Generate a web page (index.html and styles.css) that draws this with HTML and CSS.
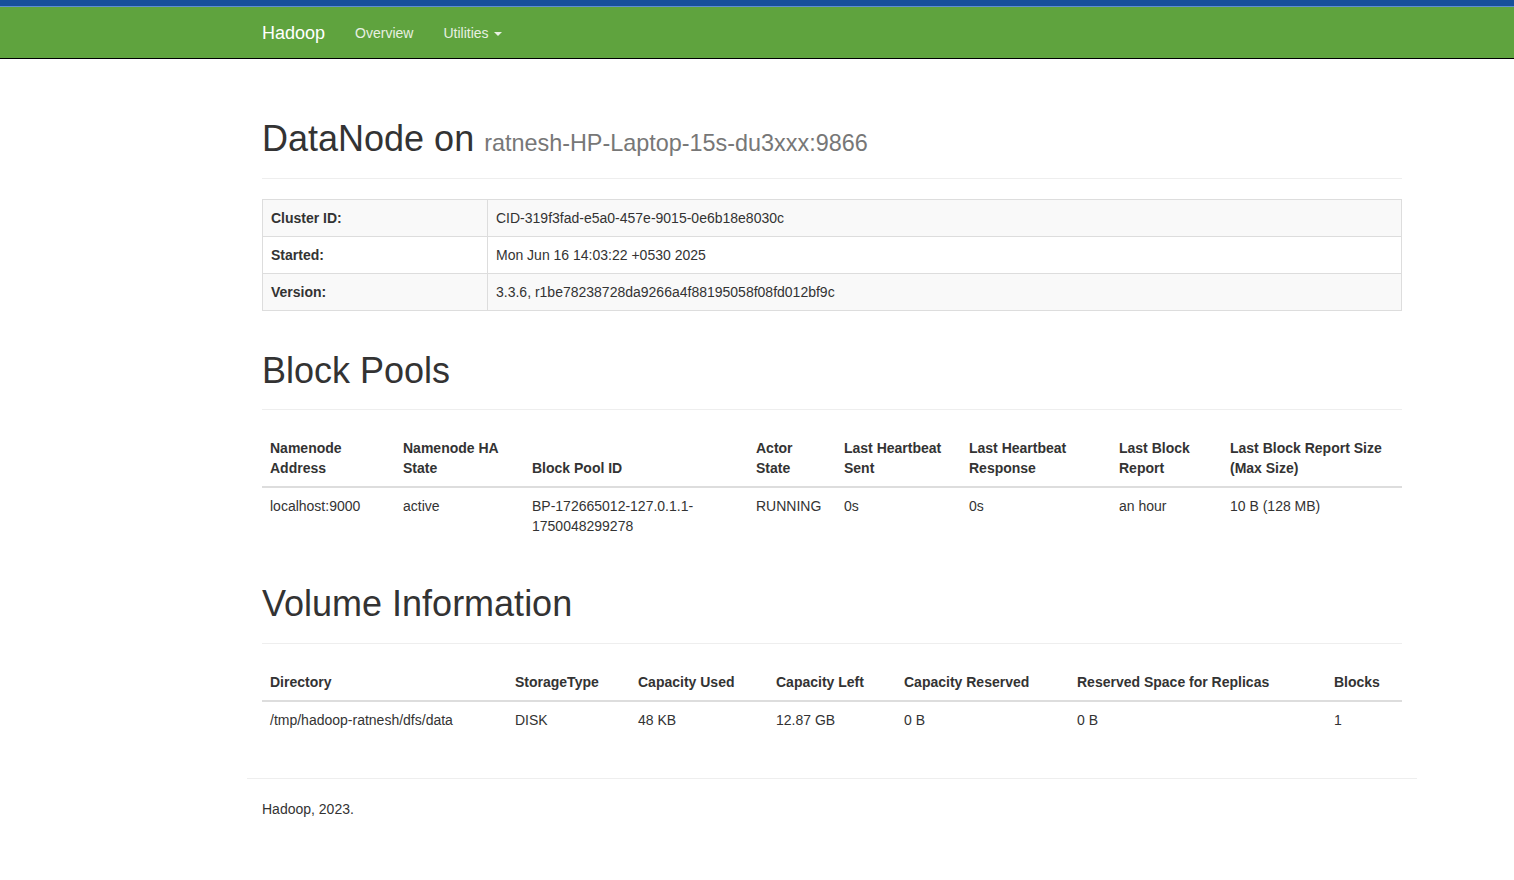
FILE: index.html
```html
<!DOCTYPE html>
<html>
<head>
<meta charset="utf-8">
<title>DataNode Information</title>
<link rel="stylesheet" href="styles.css">
</head>
<body>
<header class="navbar">
  <div class="navbar-top"></div>
  <div class="navbar-main">
    <div class="container nav-inner">
      <a class="brand" href="#">Hadoop</a>
      <ul class="nav">
        <li><a href="#">Overview</a></li>
        <li><a href="#">Utilities <span class="caret"></span></a></li>
      </ul>
    </div>
  </div>
</header>

<div class="container main">
  <div class="page-header">
    <h1>DataNode on <small>ratnesh-HP-Laptop-15s-du3xxx:9866</small></h1>
  </div>

  <table class="table table-bordered table-striped info">
    <tbody>
      <tr><th class="info-key">Cluster ID:</th><td>CID-319f3fad-e5a0-457e-9015-0e6b18e8030c</td></tr>
      <tr><th class="info-key">Started:</th><td>Mon Jun 16 14:03:22 +0530 2025</td></tr>
      <tr><th class="info-key">Version:</th><td>3.3.6, r1be78238728da9266a4f88195058f08fd012bf9c</td></tr>
    </tbody>
  </table>

  <div class="page-header">
    <h1>Block Pools</h1>
  </div>

  <table class="table fixed">
    <colgroup>
      <col class="bp1"><col class="bp2"><col class="bp3"><col class="bp4"><col class="bp5"><col class="bp6"><col class="bp7"><col class="bp8">
    </colgroup>
    <thead>
      <tr>
        <th>Namenode Address</th>
        <th>Namenode HA State</th>
        <th>Block Pool ID</th>
        <th>Actor State</th>
        <th>Last Heartbeat Sent</th>
        <th>Last Heartbeat Response</th>
        <th>Last Block Report</th>
        <th>Last Block Report Size (Max Size)</th>
      </tr>
    </thead>
    <tbody>
      <tr>
        <td>localhost:9000</td>
        <td>active</td>
        <td>BP-172665012-127.0.1.1-1750048299278</td>
        <td>RUNNING</td>
        <td>0s</td>
        <td>0s</td>
        <td>an hour</td>
        <td>10 B (128 MB)</td>
      </tr>
    </tbody>
  </table>

  <div class="page-header">
    <h1>Volume Information</h1>
  </div>

  <table class="table fixed">
    <colgroup>
      <col class="v1"><col class="v2"><col class="v3"><col class="v4"><col class="v5"><col class="v6"><col class="v7">
    </colgroup>
    <thead>
      <tr>
        <th>Directory</th>
        <th>StorageType</th>
        <th>Capacity Used</th>
        <th>Capacity Left</th>
        <th>Capacity Reserved</th>
        <th>Reserved Space for Replicas</th>
        <th>Blocks</th>
      </tr>
    </thead>
    <tbody>
      <tr>
        <td>/tmp/hadoop-ratnesh/dfs/data</td>
        <td>DISK</td>
        <td>48 KB</td>
        <td>12.87 GB</td>
        <td>0 B</td>
        <td>0 B</td>
        <td>1</td>
      </tr>
    </tbody>
  </table>

  <div class="row">
    <hr>
    <div class="col-footer"><p>Hadoop, 2023.</p></div>
  </div>
</div>
</body>
</html>
```

FILE: styles.css
```css
* { box-sizing: border-box; }
html, body { margin: 0; padding: 0; }
body {
  font-family: "Liberation Sans", Arial, Helvetica, sans-serif;
  font-size: 14px;
  line-height: 1.42857143;
  color: #333;
  background: #fff;
}
a { text-decoration: none; }

.container {
  width: 1170px;
  margin-left: 247px;
  padding: 0 15px;
}
.main { padding-top: 20px; }

.navbar { margin: 0; }
.navbar-top {
  height: 7px;
  background: #16509b;
  border-bottom: 1px solid #5d8fd2;
}
.navbar-main {
  height: 52px;
  background: #5fa33e;
  border-bottom: 1px solid #000;
}
.nav-inner {
  display: flex;
  align-items: center;
  height: 51px;
}
.brand {
  display: block;
  color: #fff;
  font-size: 18px;
  line-height: 20px;
  padding: 15px 15px 15px 0;
}
.nav {
  display: flex;
  list-style: none;
  margin: 0;
  padding: 0;
}
.nav a {
  display: block;
  color: #e8f0e2;
  font-size: 14px;
  line-height: 20px;
  padding: 15px;
}
.caret {
  display: inline-block;
  width: 0;
  height: 0;
  margin-left: 2px;
  vertical-align: middle;
  border-top: 4px solid;
  border-right: 4px solid transparent;
  border-left: 4px solid transparent;
}

.page-header {
  padding-bottom: 9px;
  margin: 40px 0 20px;
  border-bottom: 1px solid #eee;
}
h1 {
  font-size: 36px;
  font-weight: 500;
  line-height: 1.1;
  margin: 20px 0 10px;
  color: #333;
}
h1 small {
  font-size: 65%;
  font-weight: normal;
  line-height: 1;
  color: #777;
}

.table {
  width: 100%;
  max-width: 100%;
  margin-bottom: 20px;
  border-collapse: collapse;
  border-spacing: 0;
}
.table.fixed { table-layout: fixed; }
.table th, .table td {
  padding: 8px;
  line-height: 1.42857143;
  vertical-align: top;
  border-top: 1px solid #ddd;
  text-align: left;
}
.table th { font-weight: bold; }
.table thead th {
  vertical-align: bottom;
  border-top: 0;
  border-bottom: 2px solid #ddd;
}
.table-bordered { border: 1px solid #ddd; }
.table-bordered th, .table-bordered td { border: 1px solid #ddd; }
.table-striped tbody tr:nth-of-type(odd) { background-color: #f9f9f9; }
.info-key { width: 225px; }

.bp1 { width: 133px; }
.bp2 { width: 129px; }
.bp3 { width: 224px; }
.bp4 { width: 88px; }
.bp5 { width: 125px; }
.bp6 { width: 150px; }
.bp7 { width: 111px; }
.bp8 { width: 180px; }

.v1 { width: 245px; }
.v2 { width: 123px; }
.v3 { width: 138px; }
.v4 { width: 128px; }
.v5 { width: 173px; }
.v6 { width: 257px; }
.v7 { width: 76px; }

.row { margin: 0 -15px; }
.row::before, .row::after { content: ""; display: table; }
.row::after { clear: both; }
hr {
  margin: 20px 0;
  border: 0;
  border-top: 1px solid #eee;
  height: 0;
}
.col-footer { padding: 0 15px; }
.col-footer p { margin: 0 0 10px; }
```
